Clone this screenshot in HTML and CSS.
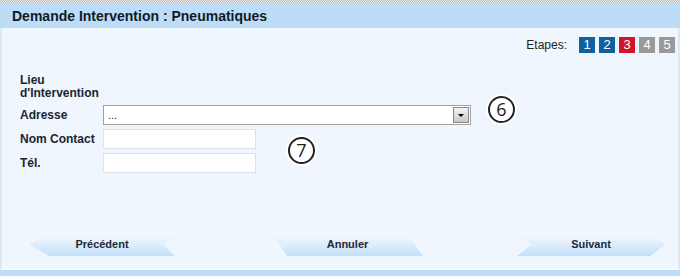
FILE: index.html
```html
<!DOCTYPE html>
<html lang="fr">
<head>
    <meta charset="UTF-8">
    <title>Demande Intervention : Pneumatiques</title>
    <link rel="stylesheet" href="styles.css">
</head>
<body>
    <section class="panel">
        <div class="dots"></div>
        <h1 class="title">Demande Intervention : Pneumatiques</h1>
        <div class="content">
            <div class="steps">
                <span class="steps-label">Etapes:</span>
                <span class="step done">1</span>
                <span class="step done">2</span>
                <span class="step current">3</span>
                <span class="step">4</span>
                <span class="step">5</span>
            </div>

            <div class="form">
                <div class="group">Lieu<br>d'Intervention</div>
                <div class="row">
                    <label>Adresse</label>
                    <div class="select">
                        <span>...</span>
                        <i class="arrow"></i>
                    </div>
                </div>
                <div class="row">
                    <label>Nom Contact</label>
                    <input type="text" class="field">
                </div>
                <div class="row">
                    <label>Tél.</label>
                    <input type="text" class="field">
                </div>
                <!-- repères d'annotation -->
                <span class="mark mark6">6</span>
                <span class="mark mark7">7</span>
            </div>

            <div class="buttons">
                <a href="javascript:;" class="btn prev">Précédent</a>
                <a href="javascript:;" class="btn cancel">Annuler</a>
                <a href="javascript:;" class="btn next">Suivant</a>
            </div>
        </div>
        <div class="foot"></div>
    </section>
</body>
</html>
```

FILE: styles.css
```css
html,body{ margin:0; padding:0; }
body{
    width:680px;
    height:276px;
    overflow:hidden;
    font-family:"Liberation Sans", Arial, sans-serif;
    color:#1b2533;
    background:#fff;
}
.panel{
    height:276px;
    display:flex;
    flex-direction:column;
    background:#eff6fd;
}
.dots{
    height:3px;
    background:repeating-conic-gradient(#b8b8b8 0 25%, #ececec 0 50%) 0 0/2px 2px;
}
.title{
    margin:0;
    height:25px;
    line-height:26px;
    padding-left:12px;
    font-size:14px;
    font-weight:bold;
    color:#111a26;
    background:#bcdcf8;
}
.content{
    flex:1;
    display:flex;
    flex-direction:column;
    border-left:2px solid #dfe8f0;
    border-right:2px solid #dfe8f0;
    border-bottom:1px solid #fbfdff;
}

/* étapes */
.steps{
    display:flex;
    justify-content:flex-end;
    align-items:center;
    gap:4px;
    padding:9px 3px 0 0;
    font-size:12px;
}
.steps-label{ margin-right:8px; color:#222; }
.step{
    width:16px;
    height:16px;
    line-height:16px;
    text-align:center;
    font-size:13px;
    color:#fff;
    background:#999;
}
.step.done{ background:#105f9e; }
.step.current{ background:#d0152b; }

/* formulaire */
.form{
    position:relative;
    padding:21px 0 0 18px;
    font-size:12px;
    font-weight:bold;
}
.group{
    line-height:13px;
    margin-bottom:5px;
}
.row{
    display:flex;
    align-items:center;
    margin-bottom:4px;
}
.row label{ width:83px; }
.select{
    width:366px;
    height:18px;
    display:flex;
    align-items:center;
    justify-content:space-between;
    background:#fff;
    border:1px solid #a0a0a0;
    font-weight:normal;
    font-size:11px;
}
.select span{ padding-left:4px; }
.arrow{
    width:14px;
    height:14px;
    margin-right:1px;
    border:1px solid #888;
    background:linear-gradient(#f4f4f4,#c8c8c8);
    position:relative;
}
.arrow:after{
    content:"";
    position:absolute;
    left:4px;
    top:6px;
    border:3px solid transparent;
    border-top:3px solid #000;
    border-bottom:0;
}
.field{
    width:151px;
    height:18px;
    margin:0;
    padding:0;
    border:1px solid #dde3ea;
    background:#fff;
    box-sizing:content-box;
}
.mark{
    position:absolute;
    width:23px;
    height:23px;
    line-height:23px;
    text-align:center;
    border:2px solid #222;
    border-radius:50%;
    background:#fff;
    font-size:18px;
    font-weight:normal;
    font-family:"Open Sans", sans-serif;
    color:#222;
    box-shadow:0 0 0 2px #fff;
}
.mark6{ left:486px; top:43px; }
.mark7{ left:286px; top:84px; }

/* boutons */
.buttons{
    margin-top:auto;
    margin-bottom:13px;
    display:flex;
    padding-left:27px;
    font-size:11px;
    font-weight:bold;
}
.btn{
    display:block;
    height:23px;
    line-height:22px;
    text-align:center;
    text-decoration:none;
    color:#1d2838;
    background:linear-gradient(#f6fbff, #c4e0f8);
}
.prev{
    width:146px;
    clip-path:polygon(0 50%, 14% 0, 100% 0, 92% 50%, 100% 100%, 14% 100%);
}
.cancel{
    width:151px;
    margin-left:97px;
    clip-path:polygon(0 0, 89% 0, 100% 100%, 10% 100%);
}
.next{
    width:148px;
    margin-left:94px;
    clip-path:polygon(0 0, 90% 0, 100% 50%, 90% 100%, 0 100%, 10% 50%);
}
.foot{
    height:6px;
    background:#bcdcf8;
}
```
